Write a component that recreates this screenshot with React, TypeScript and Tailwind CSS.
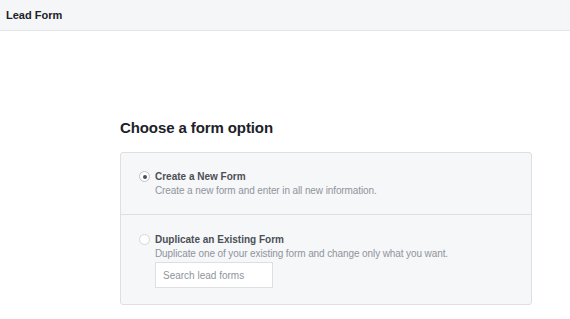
export default function App() {
  return (
    <div className="w-[570px] h-[319px] bg-white overflow-hidden font-['Liberation_Sans',Arial,sans-serif]">
      {/* top bar */}
      <div className="h-[31px] bg-[#f5f6f7] border-b border-[#e5e6e9] flex items-center px-[6px]">
        <span className="text-[11px] font-bold text-[#1d2129]">Lead Form</span>
      </div>

      <div className="pl-[120px] pr-[38px] pt-[88px]">
        <h2 className="text-[15px] font-bold text-[#1d2129] leading-[18px] tracking-[-0.1px]">Choose a form option</h2>

        <div className="mt-[15px] bg-[#f6f7f9] border border-[#dddfe2] rounded-[3px]">
          {/* option 1 */}
          <div className="h-[62px] border-b border-[#dddfe2] flex pl-[18px] pt-[17px]">
            <span className="mt-[1px] w-[11px] h-[11px] rounded-full bg-white border border-[#bec2c9] flex items-center justify-center">
              <span className="w-[4px] h-[4px] rounded-full bg-[#4b4f56]" />
            </span>
            <div className="ml-[5px]">
              <div className="text-[10px] font-bold text-[#4b4f56] leading-[13px]">Create a New Form</div>
              <div className="text-[10px] text-[#90949c] leading-[13px] mt-[1px] tracking-[-0.1px]">
                Create a new form and enter in all new information.
              </div>
            </div>
          </div>

          {/* option 2 */}
          <div className="h-[89px] flex pl-[18px] pt-[18px]">
            <span className="mt-[1px] w-[11px] h-[11px] rounded-full bg-white border border-[#d3d6db]" />
            <div className="ml-[5px]">
              <div className="text-[10px] font-bold text-[#4b4f56] leading-[13px]">Duplicate an Existing Form</div>
              <div className="text-[10px] text-[#90949c] leading-[13px] mt-[1px] tracking-[-0.1px]">
                Duplicate one of your existing form and change only what you want.
              </div>
              <input
                type="text"
                placeholder="Search lead forms"
                className="mt-[2px] w-[118px] h-[26px] bg-white border border-[#dddfe2] px-[7px] text-[10px] text-[#4b4f56] placeholder:text-[#90949c] outline-none"
              />
            </div>
          </div>
        </div>
      </div>
    </div>
  );
}
